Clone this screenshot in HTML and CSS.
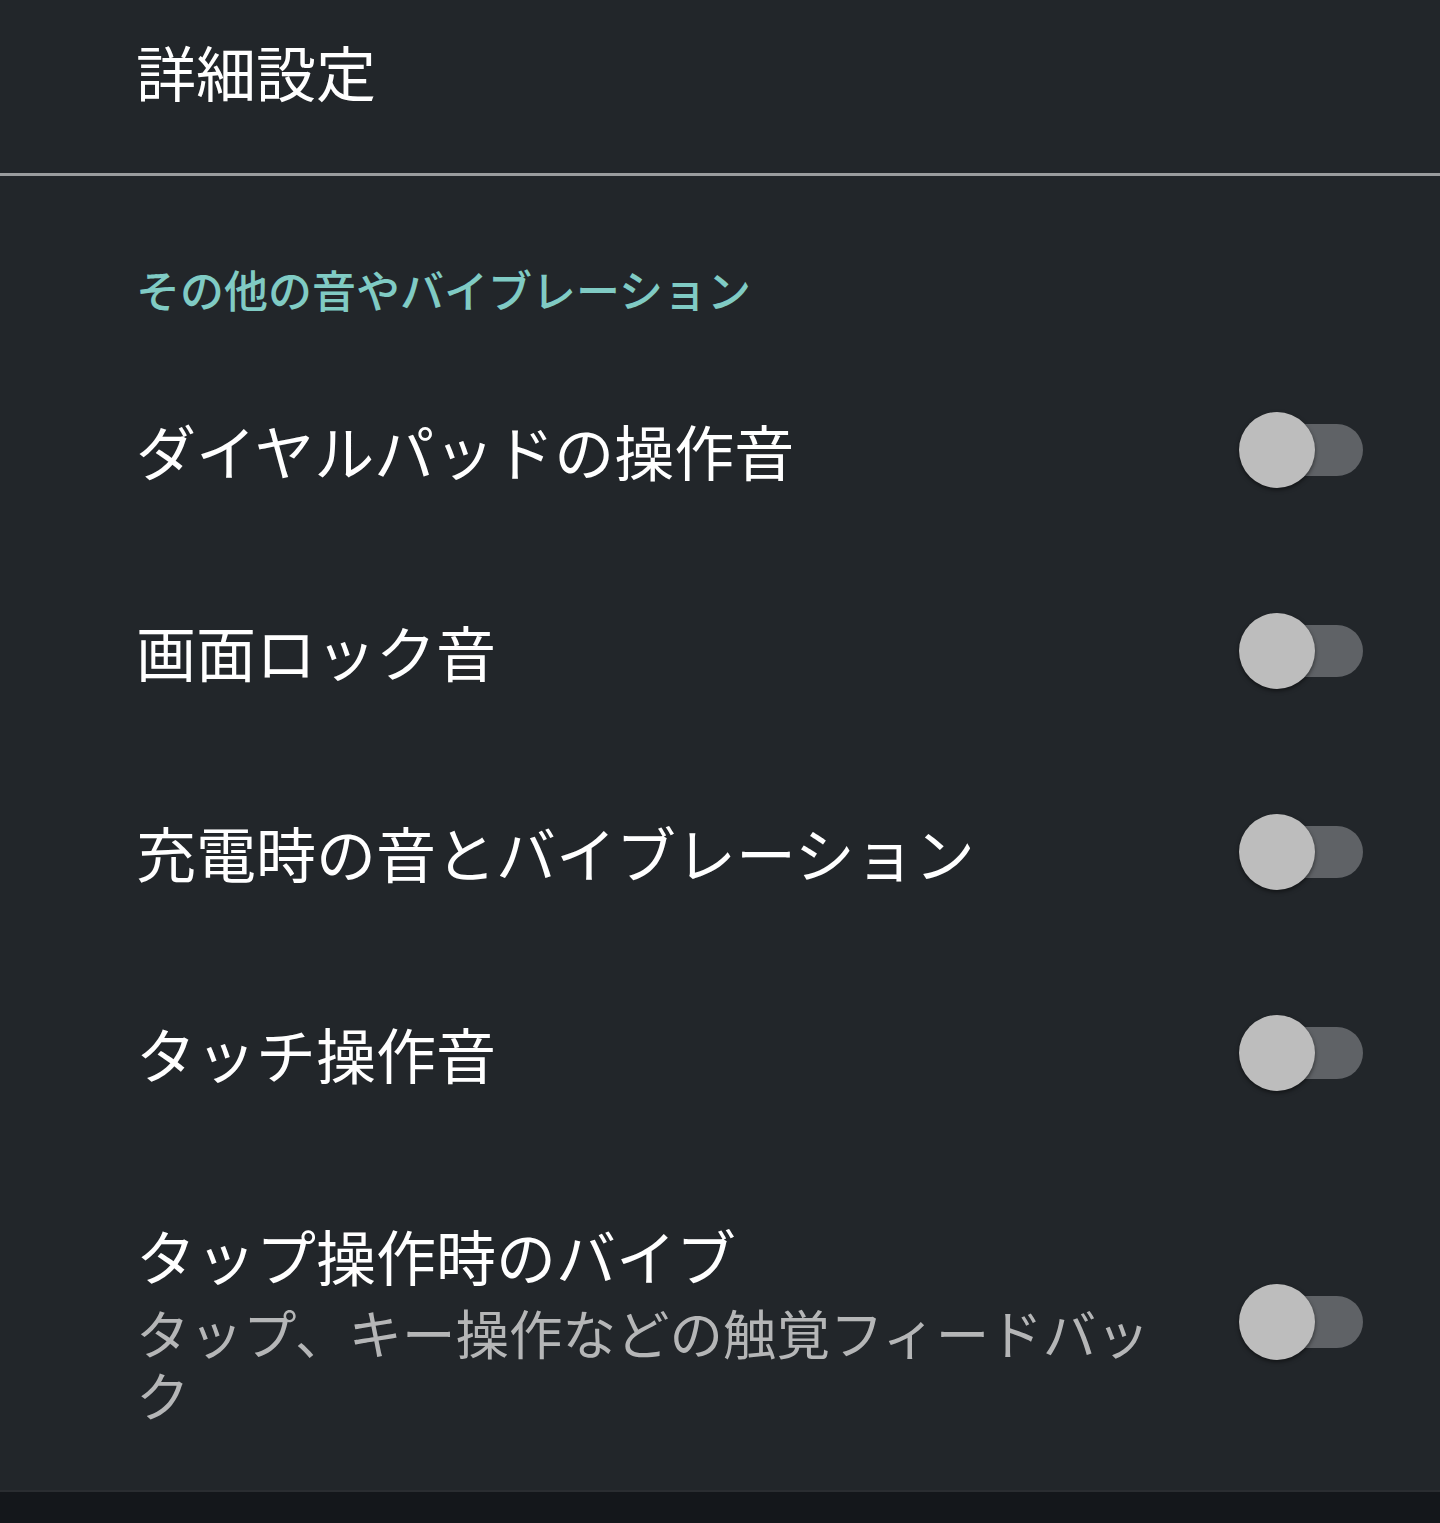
FILE: index.html
```html
<!DOCTYPE html>
<html lang="ja">
<head>
<meta charset="utf-8">
<title>詳細設定</title>
<link rel="stylesheet" href="styles.css">
</head>
<body>
<div class="screen">
  <header class="appbar">
    <h1 class="appbar-title">詳細設定</h1>
  </header>
  <main class="content">
    <h2 class="section-title">その他の音やバイブレーション</h2>
    <div class="row">
      <div class="row-text"><div class="row-title">ダイヤルパッドの操作音</div></div>
      <div class="switch"><span class="track"></span><span class="thumb"></span></div>
    </div>
    <div class="row">
      <div class="row-text"><div class="row-title">画面ロック音</div></div>
      <div class="switch"><span class="track"></span><span class="thumb"></span></div>
    </div>
    <div class="row">
      <div class="row-text"><div class="row-title">充電時の音とバイブレーション</div></div>
      <div class="switch"><span class="track"></span><span class="thumb"></span></div>
    </div>
    <div class="row">
      <div class="row-text"><div class="row-title">タッチ操作音</div></div>
      <div class="switch"><span class="track"></span><span class="thumb"></span></div>
    </div>
    <div class="row row-last">
      <div class="row-text">
        <div class="row-title">タップ操作時のバイブ</div>
        <div class="row-sub">タップ、キー操作などの触覚フィードバック</div>
      </div>
      <div class="switch"><span class="track"></span><span class="thumb"></span></div>
    </div>
  </main>
  <div class="navbar"></div>
</div>
</body>
</html>
```

FILE: styles.css
```css
html, body {
  margin: 0;
  padding: 0;
  background: #22262a;
}
body {
  font-family: "Noto Sans CJK JP", "Noto Sans", sans-serif;
  color: #ffffff;
}
.screen {
  width: 1440px;
  height: 1523px;
  display: flex;
  flex-direction: column;
  overflow: hidden;
}
.appbar {
  height: 176px;
  box-sizing: border-box;
  padding: 35px 0 0 136px;
  border-bottom: 3px solid #9a9c9e;
  flex-shrink: 0;
}
.appbar-title {
  margin: 0;
  font-size: 60px;
  line-height: 72px;
  font-weight: 400;
  color: #ffffff;
}
.content {
  flex: 1;
  display: flex;
  flex-direction: column;
}
.section-title {
  margin: 0;
  padding: 83px 0 31px 136px;
  font-size: 44px;
  line-height: 60px;
  font-weight: 500;
  color: #80cbc4;
}
.row {
  display: flex;
  align-items: center;
  padding: 62px 77px 63px 136px;
}
.row-last {
  padding-top: 65px;
  padding-bottom: 65px;
}
.row-text {
  flex: 1;
  min-width: 0;
  margin-right: 59px;
}
.row-title {
  font-size: 60px;
  line-height: 72px;
  color: #ffffff;
}
.row-sub {
  margin-top: 10px;
  font-size: 53.5px;
  line-height: 62px;
  color: #b5b6b7;
}
.switch {
  position: relative;
  width: 124px;
  height: 76px;
  flex-shrink: 0;
}
.track {
  position: absolute;
  right: 0;
  top: 12px;
  width: 111px;
  height: 52px;
  border-radius: 26px;
  background: #5f6266;
}
.thumb {
  position: absolute;
  left: 0;
  top: 0;
  width: 76px;
  height: 76px;
  border-radius: 50%;
  background: #bdbdbd;
  box-shadow: 0 2px 4px rgba(0, 0, 0, 0.5);
}
.navbar {
  margin-top: auto;
  height: 33px;
  flex-shrink: 0;
  box-sizing: border-box;
  border-top: 2px solid #2a2d31;
  background: #14171b;
}
```
